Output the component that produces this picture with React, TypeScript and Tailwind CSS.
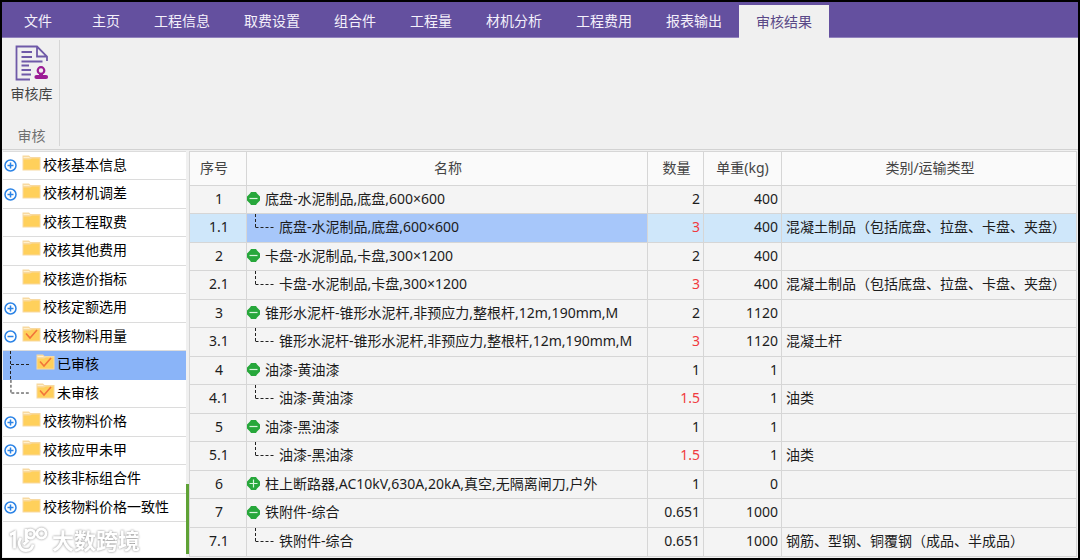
import { useState } from "react";
import clsx from "clsx";

const tabs = [
  "主页",
  "工程信息",
  "取费设置",
  "组合件",
  "工程量",
  "材机分析",
  "工程费用",
  "报表输出",
  "审核结果",
];

interface TreeItem {
  label: string;
  toggle?: "plus" | "minus";
  checked?: boolean;
  child?: "middle" | "last";
}

const treeItems: TreeItem[] = [
  { label: "校核基本信息", toggle: "plus" },
  { label: "校核材机调差", toggle: "plus" },
  { label: "校核工程取费" },
  { label: "校核其他费用" },
  { label: "校核造价指标" },
  { label: "校核定额选用", toggle: "plus" },
  { label: "校核物料用量", toggle: "minus", checked: true },
  { label: "已审核", checked: true, child: "middle" },
  { label: "未审核", checked: true, child: "last" },
  { label: "校核物料价格", toggle: "plus" },
  { label: "校核应甲未甲", toggle: "plus" },
  { label: "校核非标组合件" },
  { label: "校核物料价格一致性", toggle: "plus" },
];

interface Row {
  no: string;
  name: string;
  qty: string;
  weight: string;
  type?: string;
  changed?: boolean;
  collapsed?: boolean;
}

const rows: Row[] = [
  { no: "1", name: "底盘-水泥制品,底盘,600×600", qty: "2", weight: "400" },
  { no: "1.1", name: "底盘-水泥制品,底盘,600×600", qty: "3", weight: "400", type: "混凝土制品（包括底盘、拉盘、卡盘、夹盘）", changed: true },
  { no: "2", name: "卡盘-水泥制品,卡盘,300×1200", qty: "2", weight: "400" },
  { no: "2.1", name: "卡盘-水泥制品,卡盘,300×1200", qty: "3", weight: "400", type: "混凝土制品（包括底盘、拉盘、卡盘、夹盘）", changed: true },
  { no: "3", name: "锥形水泥杆-锥形水泥杆,非预应力,整根杆,12m,190mm,M", qty: "2", weight: "1120" },
  { no: "3.1", name: "锥形水泥杆-锥形水泥杆,非预应力,整根杆,12m,190mm,M", qty: "3", weight: "1120", type: "混凝土杆", changed: true },
  { no: "4", name: "油漆-黄油漆", qty: "1", weight: "1" },
  { no: "4.1", name: "油漆-黄油漆", qty: "1.5", weight: "1", type: "油类", changed: true },
  { no: "5", name: "油漆-黑油漆", qty: "1", weight: "1" },
  { no: "5.1", name: "油漆-黑油漆", qty: "1.5", weight: "1", type: "油类", changed: true },
  { no: "6", name: "柱上断路器,AC10kV,630A,20kA,真空,无隔离闸刀,户外", qty: "1", weight: "0", collapsed: true },
  { no: "7", name: "铁附件-综合", qty: "0.651", weight: "1000" },
  { no: "7.1", name: "铁附件-综合", qty: "0.651", weight: "1000", type: "钢筋、型钢、铜覆钢（成品、半成品）" },
];

function ReviewIcon() {
  return (
    <svg className="w-[34px] h-9" viewBox="0 0 34 36" fill="none" stroke="#6f5aa8" strokeWidth="1.8">
      <path d="M15 34.5H1.5V1.5H22L32 11.5V16M22 1.5V11.5H32" />
      <path d="M6.5 7H17M6.5 12H17M6.5 16.5H27.5M6.5 20.5H14M6.5 25H16M6.5 29.5H16" />
      <g stroke="#9b1c94" strokeWidth="2.2">
        <circle cx="26" cy="25.5" r="3.3" />
        <path d="M26 29V30.5" strokeWidth="4" />
        <rect x="20.5" y="31" width="11.5" height="2" rx="1" />
      </g>
    </svg>
  );
}

function TreeToggle({ open }: { open: boolean }) {
  return (
    <svg className="w-[13px] h-[13px]" viewBox="0 0 13 13" fill="none" stroke="#2b83e6" strokeWidth="1.5">
      <circle cx="6.5" cy="6.5" r="5.5" />
      <path d={open ? "M3.5 6.5H9.5" : "M3.5 6.5H9.5M6.5 3.5V9.5"} />
    </svg>
  );
}

function Folder({ checked }: { checked?: boolean }) {
  return (
    <svg className="w-[19px] h-4 shrink-0" viewBox="0 0 19 16">
      <path d="M0.5 0.5H7L8.5 2H18.5V15.5H0.5Z" fill="#f8d9a0" />
      <path d="M1.5 4.5H8L10 3.5H17.5V14.5H1.5Z" fill="#ffd05b" />
      <path d="M1.5 2.5H7.5" stroke="#fff0cc" />
      {checked && <path d="M4 7.5L8 12L15 4" fill="none" stroke="#f2753a" strokeWidth="1.6" />}
    </svg>
  );
}

function RowToggle({ collapsed }: { collapsed?: boolean }) {
  return (
    <svg className="w-[13px] h-[13px]" viewBox="0 0 13 13">
      <path d="M4 0H9L10 1.5L11.5 3L13 4.5V8.5L11.5 10L10 11.5L9 13H4L3 11.5L1.5 10L0 8.5V4.5L1.5 3L3 1.5Z" fill="#27a73b" />
      <path d={collapsed ? "M2.5 6.5H10.5M6.5 2.5V10.5" : "M2.5 6.5H10.5"} stroke="#d8f5dc" strokeWidth="1.2" />
    </svg>
  );
}

function Watermark() {
  return (
    <div className="flex items-center gap-1 pl-[6px] pt-[5px] drop-shadow-[0_0_1px_#888]">
      <svg className="w-[39px] h-[26px]" viewBox="0 0 39 26" fill="none" stroke="#fff" strokeWidth="2.8">
        <path d="M1 8L5.5 5.5V21.5" />
        <path d="M12 11C8 16 11 23.5 17 23.5C22 23.5 23.5 20 24 17.5M14.5 17.5L19.5 13" />
        <path d="M17 2V14" />
        <circle cx="21.5" cy="7" r="4.2" />
        <circle cx="32.5" cy="6.5" r="4.5" />
      </svg>
      <span className="text-[22px] leading-[26px] font-bold text-white">大数跨境</span>
    </div>
  );
}

export default function App() {
  const [activeTab, setActiveTab] = useState("审核结果");
  const [activeItem, setActiveItem] = useState("已审核");
  const [activeRow, setActiveRow] = useState("1.1");

  return (
    <div className="bg-white pb-px font-['Noto_Sans','Noto_Sans_CJK_SC',sans-serif] text-sm leading-5 text-[#1c1c1c]">
      <div className="border-2 border-black bg-[#f0f0f0]">
        <nav className="flex h-9 items-end border-b border-[#9182bd] bg-[#64509f]">
          <button className="h-8 w-[73px] pr-px text-[#f4f0fb]">文件</button>
          {tabs.map((tab) => (
            <button
              key={tab}
              onClick={() => setActiveTab(tab)}
              className={clsx(
                "px-[17px] whitespace-nowrap",
                tab === activeTab ? "-mb-px h-[33px] bg-[#f0f0f0] text-[#594887]" : "h-8 text-[#f4f0fb]"
              )}
            >
              {tab}
            </button>
          ))}
        </nav>

        <section className="flex border-b border-[#d2d2d2] pt-[2px] pb-[3px]">
          <div className="flex w-[58px] flex-col items-center border-r border-[#d6d6d6] pt-[5px] pl-[2px]">
            <button className="flex flex-col items-center gap-[3px] text-[#444]">
              <ReviewIcon />
              <span>审核库</span>
            </button>
            <div className="pt-[22px] text-[#707070]">审核</div>
          </div>
        </section>

        <main className="flex pt-px pb-px">
          <aside className="ml-px flex w-[183px] shrink-0 flex-col border-t border-[#dcdcdc] bg-white">
            <ul>
              {treeItems.map((item) => (
                <li
                  key={item.label}
                  className={clsx(
                    "flex items-center border-b odd:h-7 even:h-[29px]",
                    item.label === activeItem && "bg-[#8ab4f8]",
                    item.child === "middle" ? "border-transparent" : "border-[#dcdcdc]"
                  )}
                >
                  {item.child ? (
                    <svg className="ml-[7px] h-full w-[26px] shrink-0" viewBox="0 0 26 28" fill="none" stroke="#222" strokeDasharray="3 2">
                      <path d={item.child === "last" ? "M0.5 0V13.5" : "M0.5 0V28"} />
                      <path d="M1 13.5H20" />
                    </svg>
                  ) : (
                    <span className="flex w-[19px] shrink-0 pl-px">
                      {item.toggle && (
                        <button aria-label={item.label}>
                          <TreeToggle open={item.toggle === "minus"} />
                        </button>
                      )}
                    </span>
                  )}
                  <button
                    onClick={() => setActiveItem(item.label)}
                    className="flex items-start gap-[2px] pb-[2px] whitespace-nowrap text-black"
                  >
                    <Folder checked={item.checked} />
                    {item.label}
                  </button>
                </li>
              ))}
            </ul>
            <Watermark />
          </aside>

          <div className="flex w-[3px] shrink-0 flex-col justify-end pb-[3px]">
            <div className="h-[70px] bg-[#5fa236]" />
          </div>

          <div className="min-w-0 grow pr-px">
            <table className="w-full table-fixed border-separate border-spacing-0 border-t border-l border-[#d6d6d6] bg-[#f4f4f4]">
              <thead>
                <tr className="h-[34px] bg-[#fafafa] text-[#444] *:border-r *:border-b *:border-[#d6d6d6] *:px-0 *:pt-0 *:pb-[2px] *:font-normal">
                  <th className="w-[57px] pr-2!">序号</th>
                  <th className="w-[401px] pl-[2px]!">名称</th>
                  <th className="w-14 pl-[2px]!">数量</th>
                  <th className="w-[78px]">单重(kg)</th>
                  <th className="pl-[2px]!">类别/运输类型</th>
                </tr>
              </thead>
              <tbody>
                {rows.map((row) => {
                  const selected = row.no === activeRow;
                  return (
                    <tr
                      key={row.no}
                      onClick={() => setActiveRow(row.no)}
                      className={clsx(
                        "odd:h-7 even:h-[29px] *:border-r *:border-b *:border-[#d6d6d6] *:pt-0 *:pb-[2px] *:whitespace-nowrap",
                        selected && "bg-[#cfe7fa]"
                      )}
                    >
                      <td className="pr-0 pl-[2px] text-center">{row.no}</td>
                      <td className={clsx("px-0", selected && "bg-[#a7c7fa]")}>
                        <div className="flex items-center">
                          {row.no.includes(".") ? (
                            <svg className="mr-1 ml-2 h-[26px] w-5 shrink-0" viewBox="0 0 20 26" fill="none" stroke="#222" strokeDasharray="3 2">
                              <path d="M0.5 0V13.5" />
                              <path d="M0.5 13.5H20" />
                            </svg>
                          ) : (
                            <button className="mr-[5px]" aria-label={row.name}>
                              <RowToggle collapsed={row.collapsed} />
                            </button>
                          )}
                          <span>{row.name}</span>
                        </div>
                      </td>
                      <td className={clsx("pr-[3px] pl-0 text-right", row.changed && "text-[#f03a3f]")}>{row.qty}</td>
                      <td className="pr-[3px] pl-0 text-right">{row.weight}</td>
                      <td className="pr-0 pl-1">{row.type}</td>
                    </tr>
                  );
                })}
              </tbody>
            </table>
          </div>
        </main>
      </div>
    </div>
  );
}
